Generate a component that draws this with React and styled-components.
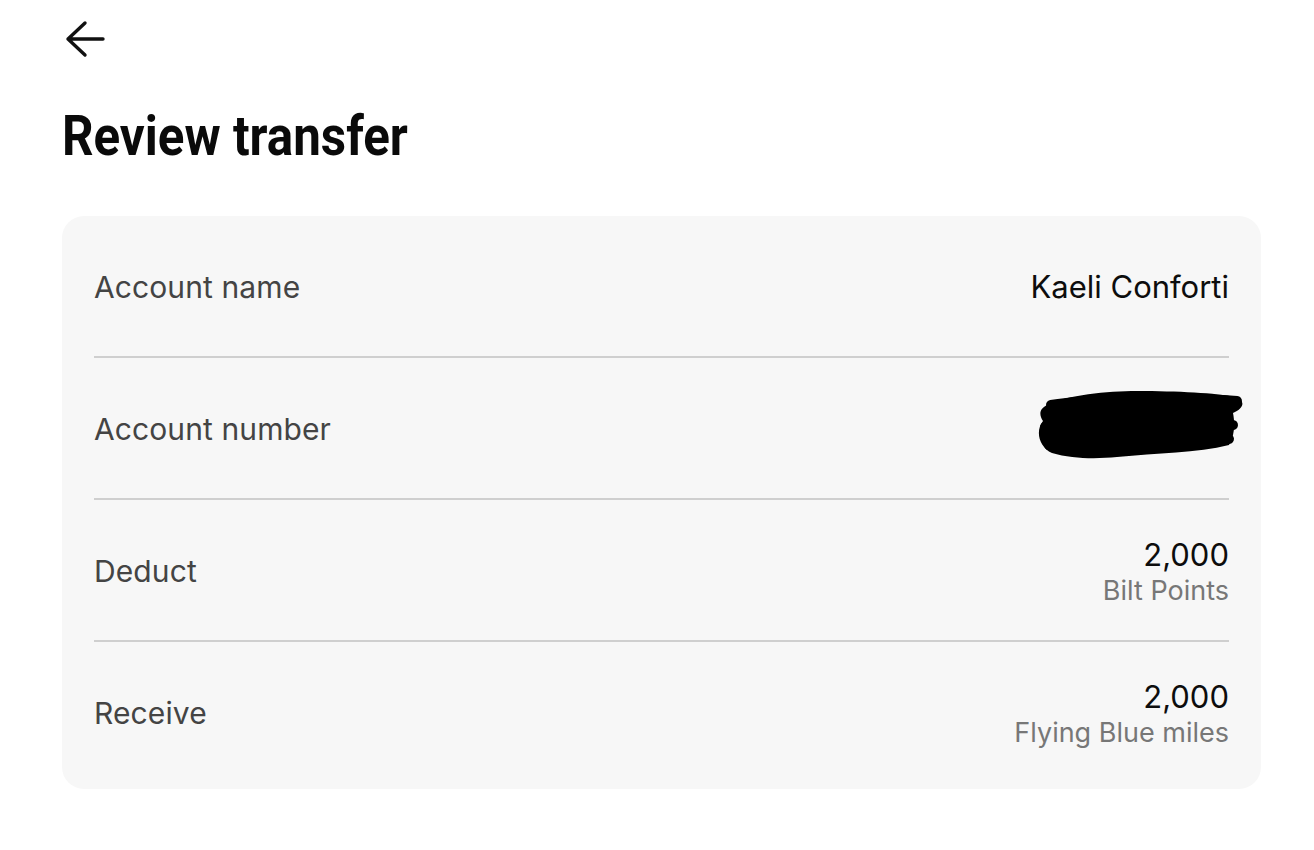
import React from 'react';
import styled, { createGlobalStyle } from 'styled-components';

const GlobalStyle = createGlobalStyle`
  html, body {
    margin: 0;
    padding: 0;
    background: #ffffff;
  }
  body {
    font-family: Inter, "Noto Sans", "Liberation Sans", sans-serif;
    color: #111;
  }
`;

const rows = [
  { label: 'Account name', value: 'Kaeli Conforti' },
  { label: 'Account number', redacted: true },
  { label: 'Deduct', value: '2,000', sub: 'Bilt Points' },
  { label: 'Receive', value: '2,000', sub: 'Flying Blue miles' },
];

function BackArrow() {
  return (
    <svg width="42" height="38" viewBox="0 0 42 38" fill="none">
      <path
        d="M20 3 L3 19 L20 35 M3 19 H38"
        stroke="#111"
        strokeWidth="3.4"
        strokeLinecap="round"
        strokeLinejoin="round"
      />
    </svg>
  );
}

function Scribble() {
  return (
    <svg width="210" height="76" viewBox="0 0 210 76">
      <path
        d="M10 18 C30 8, 70 4, 100 4 C140 4, 180 6, 198 10 C210 14, 206 22, 196 26 C198 36, 198 48, 192 58 C160 66, 120 66, 80 70 C60 72, 35 72, 15 66 C2 60, -2 44, 6 34 C2 28, 2 22, 10 18 Z"
        fill="#000"
      />
      <path
        d="M14 18 C50 12, 150 10, 200 14 M8 40 C60 36, 150 36, 196 38 M12 58 C60 60, 140 56, 192 52"
        stroke="#000"
        strokeWidth="10"
        strokeLinecap="round"
        fill="none"
      />
    </svg>
  );
}

export default function App() {
  return (
    <>
      <GlobalStyle />
      <PAGE>
        <BACK>
          <BackArrow />
        </BACK>
        <TITLE>Review transfer</TITLE>
        <CARD>
          {rows.map((row, key) => (
            <ROW key={key} $first={key === 0}>
              <LABEL>{row.label}</LABEL>
              {row.redacted ? (
                <REDACTED>
                  <Scribble />
                </REDACTED>
              ) : (
                <VALUE_GROUP $stacked={!!row.sub}>
                  <VALUE>{row.value}</VALUE>
                  {row.sub && <SUB>{row.sub}</SUB>}
                </VALUE_GROUP>
              )}
            </ROW>
          ))}
        </CARD>
      </PAGE>
    </>
  );
}

const PAGE = styled.div`
  padding: 20px 0 0 62px;
  width: 1199px;
`;

const BACK = styled.div`
  display: flex;
  margin-left: 3px;
  height: 38px;
`;

const TITLE = styled.h1`
  margin: 46px 0 0 0;
  font-family: Roboto, "DejaVu Sans", sans-serif;
  font-weight: 700;
  font-size: 56px;
  line-height: 64px;
  letter-spacing: 0;
  color: #0a0a0a;
  display: inline-block;
  transform: scaleX(0.88);
  transform-origin: left center;
`;

const CARD = styled.div`
  margin-top: 48px;
  background: #f7f7f7;
  border-radius: 22px;
  padding: 0 32px 7px;
`;

const ROW = styled.div`
  display: flex;
  align-items: center;
  justify-content: space-between;
  height: 140px;
  border-top: ${p => (p.$first ? 'none' : '2px solid #cfcfcf')};
`;

const LABEL = styled.div`
  font-size: 30px;
  color: #444;
  letter-spacing: 0.1px;
  padding-top: 2px;
`;

const VALUE_GROUP = styled.div`
  display: flex;
  flex-direction: column;
  align-items: flex-end;
  padding-top: ${p => (p.$stacked ? '5px' : '2px')};
`;

const VALUE = styled.div`
  font-size: 31px;
  line-height: 36px;
  color: #0d0d0d;
`;

const SUB = styled.div`
  font-size: 27px;
  line-height: 36px;
  color: #777;
`;

const REDACTED = styled.div`
  display: flex;
  margin-right: -18px;
  margin-top: -6px;
`;
